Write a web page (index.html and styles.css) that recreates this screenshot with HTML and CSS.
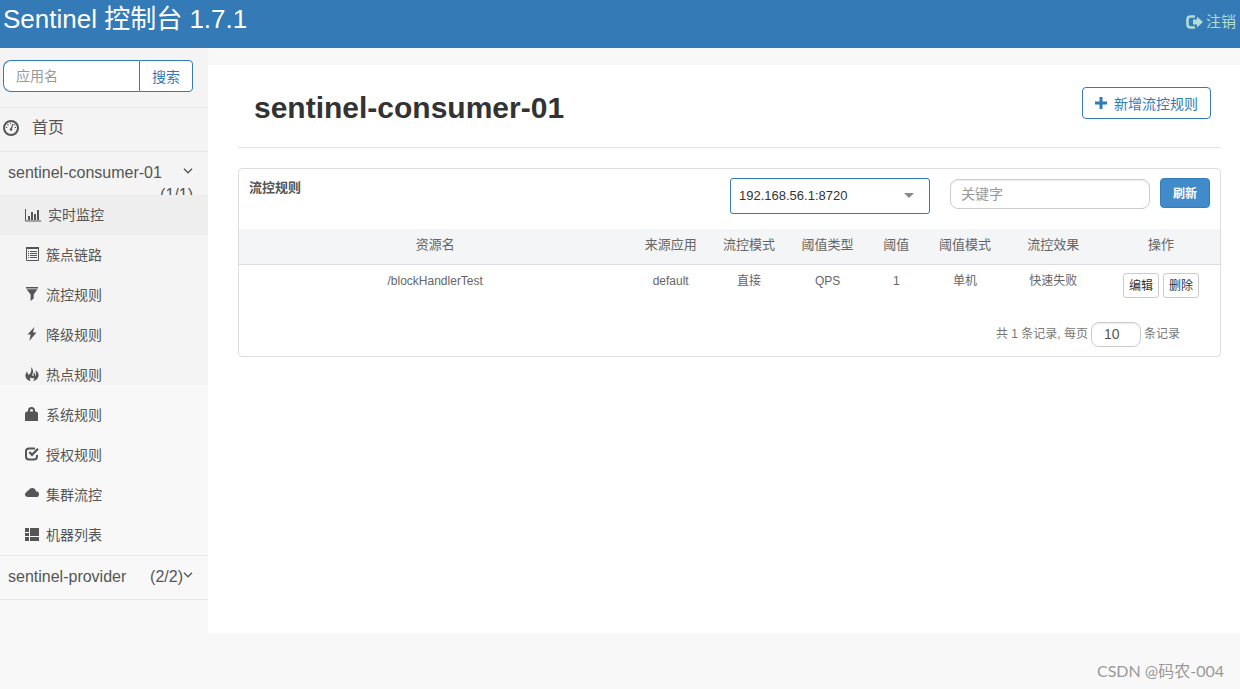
FILE: index.html
```html
<!DOCTYPE html>
<html lang="zh-CN">
<head>
<meta charset="utf-8">
<title>Sentinel 控制台</title>
<link rel="stylesheet" href="styles.css">
</head>
<body>
<header class="topbar">
  <a class="brand" href="#">Sentinel 控制台 1.7.1</a>
  <a class="logout" href="#">
    <svg class="logout-icon" viewBox="0 0 17 14"><path d="M9 1.500H4.500Q1.500 1.500 1.500 4.500v5Q1.500 12.500 4.500 12.500H9" fill="none" stroke="currentColor" stroke-width="2.600"/><path d="M7 4.500h4V1.500l6 5.500-6 5.500V9.500H7z" fill="currentColor"/></svg>
    <span>注销</span>
  </a>
</header>
<div class="layout">
  <nav class="sidebar">
    <form class="search">
      <input class="search-input" type="text" placeholder="应用名" aria-label="应用名">
      <button class="search-button" type="button">搜索</button>
    </form>
    <ul class="menu">
      <li class="menu-item">
        <a class="menu-home" href="#">
          <svg class="home-icon" viewBox="0 0 16 16" fill="none" stroke="currentColor"><circle cx="8" cy="8" r="7" stroke-width="2"/><path d="M8 9.500l2-5.500" stroke-width="1.200"/><circle cx="8" cy="9.500" r="1.300" fill="currentColor" stroke="none"/><path d="M3 7.500h1.300M11.700 7.500H13M4.500 4.500l.9.900M7 3.300h1M11.500 5l.8-.6" stroke-width="1.200"/></svg>
          <span>首页</span>
        </a>
      </li>
      <li class="menu-item">
        <a class="menu-app" href="#">
          <span class="app-name">sentinel-consumer-01</span>
          <svg class="chevron" viewBox="0 0 10 6"><path d="M1 .8l4 4 4-4" fill="none" stroke="currentColor" stroke-width="1.300"/></svg>
          <span class="app-count count-wrapped">(1/1)</span>
        </a>
        <ul class="submenu">
          <li><a class="sub-link active" href="#"><svg class="sub-icon wide" viewBox="0 0 16 14"><path d="M.5 1v12H16" fill="none" stroke="currentColor"/><path d="M3 8h2v4H3zM6 4h2v8H6zM9 6h2v6H9zM12 2h2v10h-2z" fill="currentColor"/></svg><span>实时监控</span></a></li>
          <li><a class="sub-link" href="#"><svg class="sub-icon" viewBox="0 0 14 14"><path d="M1.500 1.500h12v12h-12z" fill="none" stroke="currentColor"/><path d="M1 0h13v2H1zM3 4h1v1H3zM5 4h7v1H5zM3 6h1v1H3zM5 6h7v1H5zM3 8h1v1H3zM5 8h7v1H5zM3 10h1v1H3zM5 10h7v1H5z" fill="currentColor"/></svg><span>簇点链路</span></a></li>
          <li><a class="sub-link" href="#"><svg class="sub-icon" viewBox="0 0 14 14"><path d="M1 0h12v1.500H1zM1.500 2.300h11L8.700 7.500v4L5.600 14V7.500z" fill="currentColor"/></svg><span>流控规则</span></a></li>
          <li><a class="sub-link" href="#"><svg class="sub-icon" viewBox="0 0 14 14"><path d="M9.500 0L2.500 7.500h3.200L4.300 14l7.200-8.500H8z" fill="currentColor"/></svg><span>降级规则</span></a></li>
          <li><a class="sub-link" href="#"><svg class="sub-icon" viewBox="0 0 14 14"><path d="M6 0c1.800 2 2.600 3.700 1.900 5.800-.5 1.500-1 2.600-.1 3.200 1.200 0 1.300-1.900.5-3.800 1.700.9 2.600 2.200 2.200 4.300 1-1 .9-3-.2-6.300C12.800 4.600 14 6.700 13.500 9.300 13 12 10.800 13.600 8 14c1.300-1.400 1.500-2.400 1-3.300-1.200 1-3 .6-3.800-.5-.4 1.300-.3 2.500.6 3.800C3 13.500.8 12 .5 9.300.3 7.300 1 5.800 2.300 4.300c.1 1.800.4 3.100 1.500 3.500C6 6.200 7 3.500 6 0z" fill="currentColor"/></svg><span>热点规则</span></a></li>
          <li><a class="sub-link" href="#"><svg class="sub-icon" viewBox="0 0 14 14"><path d="M4 6V3.500Q4 1 6.500 1T9 3.500V6" fill="none" stroke="currentColor" stroke-width="2"/><path d="M1.500 4.500h10L13 6v7.500q0 .5-.5.500H.5q-.5 0-.5-.5V6z" fill="currentColor"/></svg><span>系统规则</span></a></li>
          <li><a class="sub-link" href="#"><svg class="sub-icon" viewBox="0 0 14 14" fill="none" stroke="currentColor"><path d="M10 1.500H4Q1 1.500 1 4.500v5Q1 12.500 4 12.500h5q3 0 3-3V8" stroke-width="2"/><path d="M4.300 5l2.700 2.800 6-6" stroke-width="2.300"/></svg><span>授权规则</span></a></li>
          <li><a class="sub-link" href="#"><svg class="sub-icon" viewBox="0 0 14 14"><path d="M3 10Q0 10 0 7.300 0 5.200 1.800 4.900 2 3.300 3.700 3.300 4.700 1 7.200 1q3 0 3.700 3.200Q14 4.200 14 7.200 14 10 11.200 10z" fill="currentColor"/></svg><span>集群流控</span></a></li>
          <li><a class="sub-link" href="#"><svg class="sub-icon" viewBox="0 0 14 14"><path d="M0 1h4v4H0zM5 1h9v8H5zM0 6h4v3H0zM0 10h4v4H0zM5 10h9v4H5z" fill="currentColor"/></svg><span>机器列表</span></a></li>
        </ul>
      </li>
      <li class="menu-item">
        <a class="menu-app" href="#">
          <span class="app-name">sentinel-provider</span>
          <span class="app-count">(2/2)</span>
          <svg class="chevron" viewBox="0 0 10 6"><path d="M1 .8l4 4 4-4" fill="none" stroke="currentColor" stroke-width="1.300"/></svg>
        </a>
      </li>
    </ul>
  </nav>
  <div class="page">
    <main class="content">
      <div class="page-head">
        <h1 class="page-title">sentinel-consumer-01</h1>
        <button class="add-button" type="button">
          <svg class="plus" viewBox="0 0 12 12"><path d="M4.500 0h3v4.500H12v3H7.500V12h-3V7.500H0v-3h4.500z" fill="currentColor"/></svg>
          <span>新增流控规则</span>
        </button>
      </div>
      <section class="card">
        <div class="card-head">
          <h2 class="card-title">流控规则</h2>
          <div class="select-box">
            <select class="machine-select" aria-label="机器">
              <option>192.168.56.1:8720</option>
            </select>
            <svg class="caret" viewBox="0 0 10 5"><path d="M0 0h10L5 5z" fill="currentColor"/></svg>
          </div>
          <input class="keyword" type="text" placeholder="关键字" aria-label="关键字">
          <button class="refresh" type="button">刷新</button>
        </div>
        <table class="rules">
          <colgroup>
            <col class="w40"><col class="w8"><col class="w8"><col class="w8"><col class="w6"><col class="w8"><col class="w10"><col class="w12">
          </colgroup>
          <thead>
            <tr><th>资源名</th><th>来源应用</th><th>流控模式</th><th>阈值类型</th><th>阈值</th><th>阈值模式</th><th>流控效果</th><th>操作</th></tr>
          </thead>
          <tbody>
            <tr>
              <td>/blockHandlerTest</td><td>default</td><td>直接</td><td>QPS</td><td>1</td><td>单机</td><td>快速失败</td>
              <td><div class="actions"><button class="small-button" type="button">编辑</button><button class="small-button" type="button">删除</button></div></td>
            </tr>
          </tbody>
        </table>
        <div class="pager">
          <label for="page-size">共 1 条记录, 每页</label>
          <input class="page-size" id="page-size" type="text" value="10">
          <span>条记录</span>
        </div>
      </section>
    </main>
    <footer class="credit">CSDN @码农-004</footer>
  </div>
</div>
</body>
</html>
```
FILE: styles.css
```css
* { box-sizing: border-box; }
body {
  margin: 0;
  min-height: 100vh;
  display: flex;
  flex-direction: column;
  background: #f8f8f8;
  color: #555;
  font: 14px/20px "Liberation Sans", "Noto Sans CJK SC", sans-serif;
}
a { color: inherit; text-decoration: none; }
ul { list-style: none; margin: 0; padding: 0; }
svg { display: block; flex: none; }
button, input, select { font-family: inherit; margin: 0; }
input::placeholder { color: #999; opacity: 1; }

.topbar {
  display: flex;
  justify-content: space-between;
  align-items: flex-start;
  height: 48px;
  padding: 0 4px 0 3px;
  background: #337ab7;
}
.brand { color: #fff; font-size: 26px; line-height: 38px; }
.logout {
  display: flex;
  align-items: center;
  gap: 3px;
  padding-top: 12px;
  color: #b3dcd3;
  font-size: 15px;
}
.logout-icon { width: 17px; height: 14px; }

.layout { flex: 1; display: flex; }
.sidebar {
  flex: none;
  width: 208px;
  padding-top: 12px;
  background: linear-gradient(#f4f4f4 337px, #f8f8f8 337px);
}
.search { display: flex; width: 190px; height: 32px; margin: 0 0 15px 3px; }
.search-input {
  flex: 1;
  min-width: 0;
  padding: 0 12px;
  border: 1px solid #337ab7;
  border-right: 0;
  border-radius: 8px 0 0 8px;
  background: #fff;
  font-size: 14px;
}
.search-button {
  width: 54px;
  padding: 0;
  border: 1px solid #337ab7;
  border-radius: 0 4px 4px 0;
  background: #fff;
  color: #337ab7;
  font-size: 14px;
}
.menu { border-top: 1px solid #e7e7e7; font-size: 16px; }
.menu-item { border-bottom: 1px solid #e7e7e7; }
.menu-home { display: flex; align-items: center; gap: 13px; height: 43px; padding: 0 3px 4px; }
.home-icon { width: 16px; height: 16px; }
.menu-app {
  display: flex;
  flex-wrap: wrap;
  align-content: flex-start;
  align-items: center;
  height: 43px;
  overflow: hidden;
  padding: 10px 15px 0 8px;
}
.app-name { flex: 1; line-height: 22px; }
.app-count { line-height: 22px; }
.count-wrapped { width: 100%; text-align: right; }
.chevron { width: 10px; height: 6px; margin-bottom: 4px; }
.sub-link {
  display: flex;
  align-items: center;
  gap: 7px;
  height: 40px;
  padding-left: 25px;
  font-size: 14px;
}
.sub-link.active { background: #eee; }
.sub-icon { width: 14px; height: 14px; margin-bottom: 2px; }
.sub-icon.wide { width: 16px; margin-bottom: 0; }

.page { flex: 1; min-width: 0; display: flex; flex-direction: column; padding-top: 17px; }
.content { flex: 1; padding: 0 19px 0 30px; background: #fff; }
.page-head {
  display: flex;
  justify-content: space-between;
  align-items: flex-start;
  height: 83px;
  padding: 22px 10px 0 16px;
  border-bottom: 1px solid #e4e4e4;
}
.page-title { margin: 0; color: #333; font-size: 30px; line-height: 42px; }
.add-button {
  display: flex;
  align-items: center;
  justify-content: center;
  gap: 7px;
  height: 32px;
  padding: 0 12px;
  border: 1px solid #337ab7;
  border-radius: 4px;
  background: #fff;
  color: #337ab7;
  font-size: 14px;
}
.plus { width: 12px; height: 12px; }

.card { margin-top: 20px; border: 1px solid #ddd; border-radius: 4px; color: #666; }
.card-head { display: flex; align-items: flex-start; height: 60px; padding: 9px 10px 0; }
.card-title { flex: 1; margin: 0; color: #555; font-size: 13px; line-height: 20px; }
.select-box { position: relative; width: 200px; margin-right: 20px; }
.machine-select {
  display: block;
  width: 100%;
  height: 36px;
  padding: 0 8px 2px;
  appearance: none;
  border: 1px solid #337ab7;
  border-radius: 3px;
  background: #fff;
  color: #333;
  font-size: 13px;
}
.caret { position: absolute; right: 16px; top: 15px; width: 10px; height: 5px; color: #888; pointer-events: none; }
.keyword {
  width: 200px;
  height: 30px;
  margin: 1px 10px 0 0;
  padding: 0 10px;
  border: 1px solid #ccc;
  border-radius: 8px;
  box-shadow: inset 0 1px 1px rgba(0, 0, 0, .08);
  font-size: 14px;
}
.refresh {
  width: 50px;
  height: 30px;
  padding: 0 0 2px;
  border: 1px solid #357ebd;
  border-radius: 4px;
  background: #428bca;
  color: #fff;
  font-size: 12px;
  font-weight: 700;
}
.rules { width: 100%; table-layout: fixed; border-collapse: collapse; text-align: center; }
.w6 { width: 6%; }
.w8 { width: 8%; }
.w10 { width: 10%; }
.w12 { width: 12%; }
.w40 { width: 40%; }
.rules th {
  height: 35px;
  padding: 0 0 2px;
  border-bottom: 1px solid #ddd;
  background: #f3f5f7;
  font-size: 13px;
  font-weight: 400;
}
.rules td { padding: 7px 0 0; font-size: 12px; line-height: 18px; vertical-align: top; }
.actions { display: flex; justify-content: center; gap: 4px; padding-top: 1px; }
.small-button {
  width: 36px;
  height: 25px;
  padding: 0 0 2px;
  border: 1px solid #ccc;
  border-radius: 3px;
  background: #fff;
  color: #333;
  font-size: 12px;
}
.pager {
  display: flex;
  justify-content: flex-end;
  align-items: center;
  gap: 3px;
  padding: 24px 40px 9px 0;
  color: #777;
  font-size: 12px;
}
.page-size {
  width: 50px;
  height: 25px;
  padding: 0 12px;
  border: 1px solid #ccc;
  border-radius: 8px;
  box-shadow: inset 0 1px 1px rgba(0, 0, 0, .08);
  color: #555;
  font-size: 14px;
}
.credit {
  height: 56px;
  padding: 28px 16px 0 0;
  color: #999;
  font-family: Lato, "Noto Sans CJK SC", sans-serif;
  font-size: 16px;
  text-align: right;
}
```
